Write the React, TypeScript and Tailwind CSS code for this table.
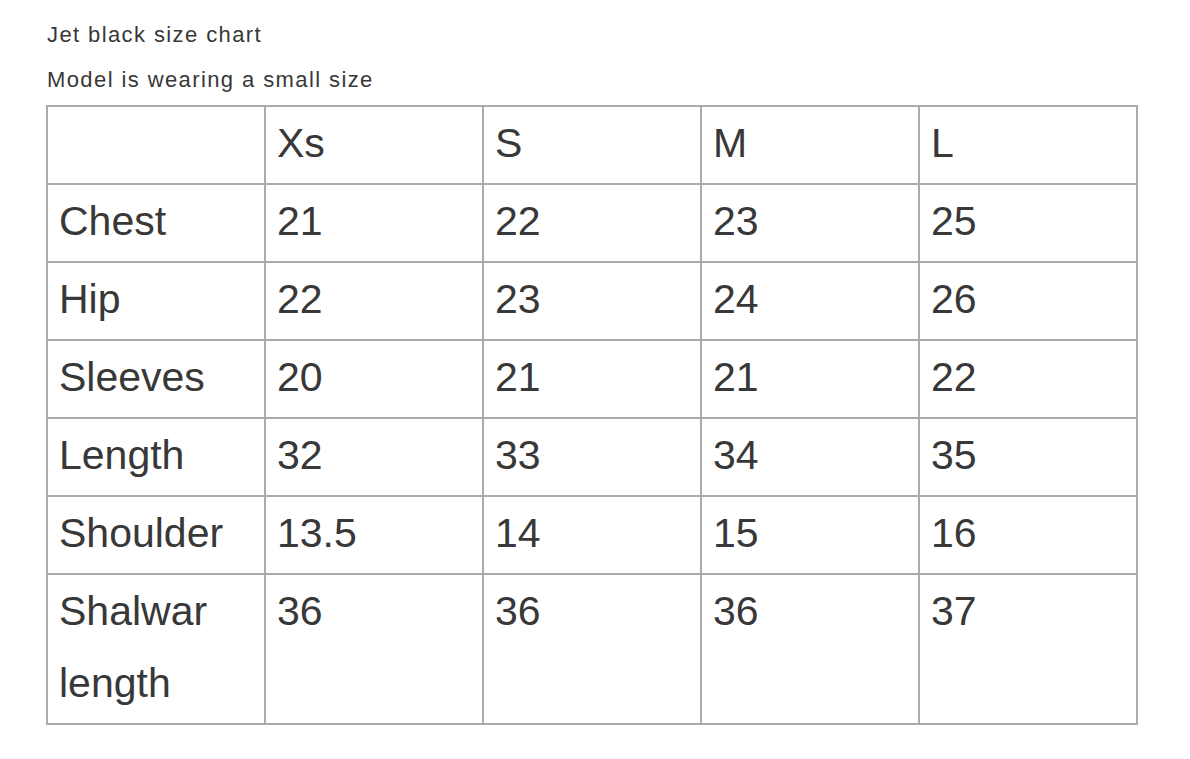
const sizes = ["Xs", "S", "M", "L"]

const rows: { label: string; values: string[] }[] = [
  { label: "Chest", values: ["21", "22", "23", "25"] },
  { label: "Hip", values: ["22", "23", "24", "26"] },
  { label: "Sleeves", values: ["20", "21", "21", "22"] },
  { label: "Length", values: ["32", "33", "34", "35"] },
  { label: "Shoulder", values: ["13.5", "14", "15", "16"] },
  { label: "Shalwar length", values: ["36", "36", "36", "37"] },
]

const cell = "border-2 border-[#ababab] pl-[11px] pr-2 pt-0 pb-[4px] align-top text-left font-normal"

export default function App() {
  return (
    <div
      className="min-h-screen bg-white pt-[12px] pl-[47px] text-[#383838]"
      style={{ fontFamily: '"Liberation Sans", Arial, sans-serif' }}
    >
      <p className="text-[22px] leading-[45px] tracking-[1.4px]">Jet black size chart</p>
      <p className="text-[22px] leading-[45px] tracking-[1.4px]">Model is wearing a small size</p>

      <table className="mt-[3px] -ml-px w-[1090px] table-fixed border-collapse text-[41px] leading-[72px]">
        <colgroup>
          <col className="w-[218px]" />
          <col className="w-[218px]" />
          <col className="w-[218px]" />
          <col className="w-[218px]" />
          <col className="w-[218px]" />
        </colgroup>
        <thead>
          <tr>
            <th className={cell}></th>
            {sizes.map((s) => (
              <th key={s} className={cell}>
                {s}
              </th>
            ))}
          </tr>
        </thead>
        <tbody>
          {rows.map((r) => (
            <tr key={r.label}>
              <td className={cell}>{r.label}</td>
              {r.values.map((v, i) => (
                <td key={i} className={cell}>
                  {v}
                </td>
              ))}
            </tr>
          ))}
        </tbody>
      </table>
    </div>
  )
}
